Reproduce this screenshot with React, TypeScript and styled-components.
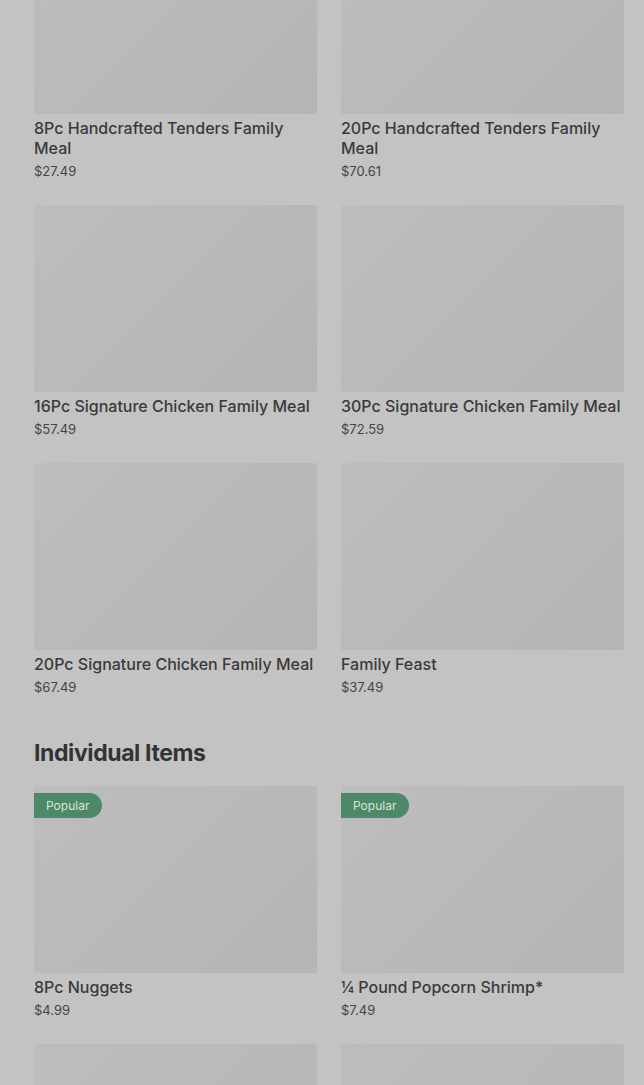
import React from 'react';
import styled, { createGlobalStyle } from 'styled-components';

const GlobalStyle = createGlobalStyle`
  html, body {
    margin: 0;
    padding: 0;
    background: #c3c3c3;
  }
  body {
    font-family: Inter, "Noto Sans", "Liberation Sans", sans-serif;
    color: #3b3b3b;
    overflow: hidden;
  }
`;

const Page = styled.div`
  padding: 0 20px 0 34px;
  margin-top: -73px;
`;

const Section = styled.section`
  margin-bottom: 42px;
`;

const SectionTitle = styled.h2`
  margin: 0 0 19px;
  font-size: 23px;
  line-height: 28px;
  font-weight: 700;
  letter-spacing: -0.4px;
  color: #333;
`;

const Grid = styled.div`
  display: grid;
  grid-template-columns: 1fr 1fr;
  column-gap: 24px;
  row-gap: 24px;
`;

const Card = styled.div`
  display: flex;
  flex-direction: column;
  min-width: 0;
`;

const Thumb = styled.div`
  position: relative;
  height: 187px;
  background: linear-gradient(135deg, #bdbdbd 0%, #b9b9b9 50%, #b5b5b5 100%);
  border-radius: 2px;
`;

const Badge = styled.span`
  position: absolute;
  top: 7px;
  left: 0;
  height: 25px;
  padding: 0 13px 0 12px;
  display: flex;
  align-items: center;
  background: #4d8966;
  color: #d9e6de;
  font-size: 12px;
  border-radius: 0 13px 13px 0;
`;

const Name = styled.div`
  margin-top: 4px;
  font-size: 16px;
  line-height: 20px;
  font-weight: 500;
  color: #3a3a3a;
`;

const Price = styled.div`
  margin-top: 3px;
  font-size: 13px;
  line-height: 20px;
  color: #454545;
`;

type Item = { name: string; price: string; popular?: boolean };

const familyMeals: Item[] = [
  { name: '8Pc Handcrafted Tenders Family Meal', price: '$27.49' },
  { name: '20Pc Handcrafted Tenders Family Meal', price: '$70.61' },
  { name: '16Pc Signature Chicken Family Meal', price: '$57.49' },
  { name: '30Pc Signature Chicken Family Meal', price: '$72.59' },
  { name: '20Pc Signature Chicken Family Meal', price: '$67.49' },
  { name: 'Family Feast', price: '$37.49' },
];

const individual: Item[] = [
  { name: '8Pc Nuggets', price: '$4.99', popular: true },
  { name: '¼ Pound Popcorn Shrimp*', price: '$7.49', popular: true },
  { name: '3Pc Handcrafted Tenders', price: '$6.99' },
  { name: '2Pc Signature Chicken', price: '$5.49' },
];

const ItemCard = ({ item }: { item: Item }) => (
  <Card>
    <Thumb>{item.popular && <Badge>Popular</Badge>}</Thumb>
    <Name>{item.name}</Name>
    <Price>{item.price}</Price>
  </Card>
);

export default function App() {
  return (
    <>
      <GlobalStyle />
      <Page>
        <Section>
          <Grid>
            {familyMeals.map((m) => (
              <ItemCard key={m.name} item={m} />
            ))}
          </Grid>
        </Section>
        <Section>
          <SectionTitle>Individual Items</SectionTitle>
          <Grid>
            {individual.map((m) => (
              <ItemCard key={m.name} item={m} />
            ))}
          </Grid>
        </Section>
      </Page>
    </>
  );
}
